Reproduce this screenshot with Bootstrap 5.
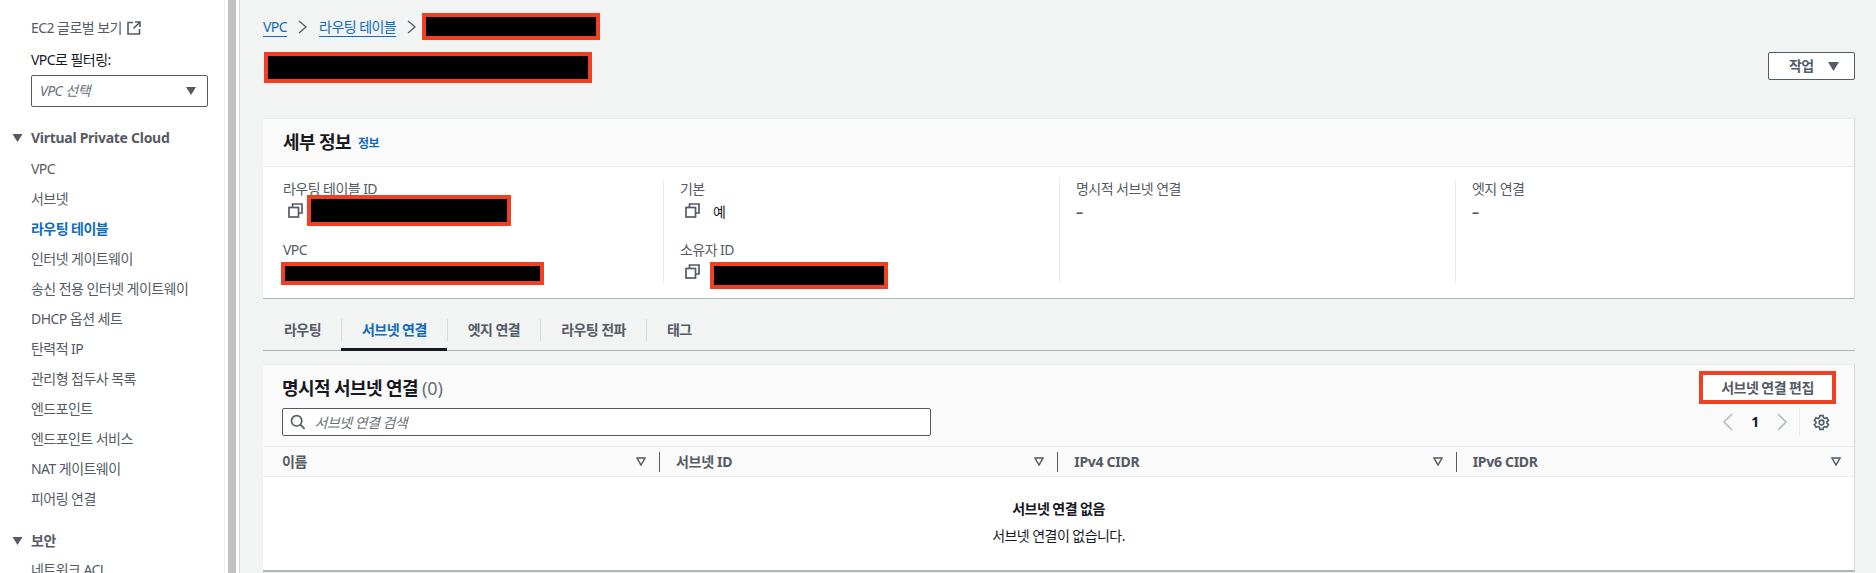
<!DOCTYPE html>
<html lang="ko">
<head>
<meta charset="utf-8">
<title>라우팅 테이블</title>
<link href="https://cdn.jsdelivr.net/npm/bootstrap@5.3.0/dist/css/bootstrap.min.css" rel="stylesheet">
<style>
html,body{height:573px;overflow:hidden}
body{font-family:"Noto Sans","Noto Sans CJK KR",sans-serif;font-size:14px;line-height:20px;letter-spacing:-.55px;color:#545b64;background:#f2f3f3}
.shell{height:573px}
.side-pane{width:225px;flex:none;background:#fff;border-right:1px solid #eaeded;padding:18px 0 0 31px;overflow:hidden}
.side-link{color:#545b64;text-decoration:none}
.side-top svg{margin-left:5px}
.side-label{color:#16191f;margin-top:12px}
.side-select{width:177px;height:32px;margin-top:5px;border:1px solid #545b64;border-radius:2px;padding:0 11px 0 8px;font-style:italic;color:#687078}
.side-head{margin:21px 0 0 -19px;font-weight:700;color:#545b64;gap:8px;letter-spacing:-.28px}
.side-head.sec2{margin-top:17px}
.side-list{margin:6px 0 0;padding:0;list-style:none}
.side-list.sec2{margin-top:4px}
.side-list li{height:30px;line-height:30px;white-space:nowrap}
.side-list .on{color:#0f6bbd;font-weight:700}
.rail{width:15px;flex:none;background:#fff;border-right:1px solid #d5dbdb;padding-left:3px}
.rail-thumb{width:8px;height:100%;background:#c1c1c1}
.main-pane{flex:1;min-width:0;padding:9px 21px 0 23px}
.redact{display:block;flex:none;background:#000;border:4px solid #f04023}
.r-crumb{width:178px;height:27px}
.r-title{width:328px;height:31px;margin-left:1px}
.r-rt{width:204px;height:31px;margin-left:4px}
.r-vpc{width:263px;height:23px;margin:5px 0 0 -2px}
.r-own{width:178px;height:27px;margin:9px 0 0 10px}
.crumbs{height:27px;margin:0;align-items:center;padding-top:4px;font-size:14px}
.crumbs .breadcrumb-item{padding:0;display:flex;align-items:center}
.crumbs .breadcrumb-item::before{display:none}
.crumbs a,.info-link{color:#0f6bbd}
.crumbs a{text-underline-offset:4px}
.crumbs svg{margin:0 12px 0 11px}
.crumbs .breadcrumb-item:nth-child(2) svg{margin-right:6px}
.title-row{margin-top:16px}
.act-btn{width:87px;height:28px;padding:0 15px 0 20px;background:#fff;border:1px solid #545b64;border-radius:2px;color:#545b64;font-size:14px;font-weight:700;line-height:20px;letter-spacing:-.55px}
.pane-card{border:0;border-top:1px solid #eaeded;border-right:1px solid #d5dbdb;border-bottom:1px solid #aab7b8;border-radius:0;background:#fff;margin-top:35px}
.pane-card>.card-header{height:48px;padding:0 0 2px 20px;background:#fafafa;border-bottom:1px solid #eaeded;border-radius:0;color:#16191f}
.pane-title{font-size:18px;font-weight:700;line-height:24px;letter-spacing:-.6px;color:#16191f}
.info-link{font-size:12px;font-weight:700;margin:4px 0 0 7px;text-decoration:none}
.pane-body{padding:12px 3px 15px 4px}
.detail-col{height:104px;padding-left:16px;border-left:1px solid #eaeded}
.detail-col.first{border-left:0}
.val-row{height:22px;margin-bottom:19px;color:#16191f}
.copy-ic{margin-left:5px;flex:none}
.yes-text{margin:3px 0 0 13px}
.dash{color:#545b64;font-weight:700;padding-top:3px}
.tab-bar{margin-top:20px;border-bottom:1px solid #aab7b8;height:32px;align-items:flex-start}
.tab-item{height:32px;border-bottom:3px solid transparent;margin-bottom:-1px}
.tab-item.on{border-bottom-color:#16191f}
.tab-bar .nav-link{height:22px;padding:1px 20px 0;line-height:20px;font-weight:700;color:#545b64;border-left:1px solid #d5dbdb}
.tab-item.lead-tab .nav-link{border-left:0;padding-left:21px}
.tab-item.on .nav-link{color:#0f6bbd}
.pane-card.lower{margin-top:13px;border-bottom-width:2px}
.lower-top{background:#fafafa;padding:6px 20px 10px 19px}
.row-a{height:33px}
.row-b{height:28px;margin-top:4px}
.edit-btn{width:137px;height:33px;margin-right:-2px;padding:0;background:#fff;border:4px solid #f04023;border-radius:0;color:#545b64;font-size:14px;font-weight:700;line-height:20px;letter-spacing:-.55px}
.count-text{font-weight:400;color:#687078;letter-spacing:0}
.search-box{width:649px;height:28px;background:#fff;border:1px solid #545b64;border-radius:2px;padding-left:7px}
.search-box .form-control{height:26px;border:0;padding:0 0 0 9px;background:transparent;font-size:14px;font-style:italic;letter-spacing:-.55px;box-shadow:none}
.search-box .form-control::placeholder{color:#687078}
.pager{color:#16191f;font-weight:700;margin-right:4px}
.pager .num{width:20px;margin:0 12px;text-align:center}
.pager .split{height:28px;border-left:1px solid #eaeded;margin:0 13px 0 12px}
.list-table{table-layout:fixed;margin:0;background:#fff;color:#16191f}
.list-table th{padding:0;height:30px;vertical-align:middle;background:#fafafa;border-top:1px solid #eaeded;border-bottom:1px solid #eaeded;color:#545b64;font-weight:700;letter-spacing:-.3px;box-shadow:none}
.list-table .c-first{width:396px}
.list-table .cell-in{height:20px;padding:0 13px 0 16px;border-left:1px solid #545b64}
.list-table .c-first .cell-in{border-left:0;padding-left:19px}
.list-table td{border:0;padding:22px 0 24px;text-align:center;box-shadow:none}
.empty-note{margin-top:7px}
.empty-head{font-weight:700;color:#16191f}
</style>
</head>
<body>
<div class="shell d-flex">
  <aside class="side-pane">
    <a class="side-link side-top d-flex align-items-center" href="#">EC2 글로벌 보기
      <svg width="14" height="14" viewBox="0 0 14 14" fill="none" stroke="#545b64" stroke-width="1.6"><path d="M6 1.5H1v11.5h11.5V8M8 1h5v5M13 1 6.5 7.5"/></svg></a>
    <div class="side-label">VPC로 필터링:</div>
    <div class="side-select d-flex align-items-center justify-content-between"><span>VPC 선택</span>
      <svg width="10" height="8" viewBox="0 0 10 8" fill="#545b64"><path d="M0 0h10L5 8z"/></svg></div>
    <div class="side-head d-flex align-items-center"><svg width="11" height="8" viewBox="0 0 10 8" fill="#545b64"><path d="M0 0h10L5 8z"/></svg><span>Virtual Private Cloud</span></div>
    <ul class="side-list">
      <li><a class="side-link" href="#">VPC</a></li>
      <li><a class="side-link" href="#">서브넷</a></li>
      <li><a class="side-link on" href="#">라우팅 테이블</a></li>
      <li><a class="side-link" href="#">인터넷 게이트웨이</a></li>
      <li><a class="side-link" href="#">송신 전용 인터넷 게이트웨이</a></li>
      <li><a class="side-link" href="#">DHCP 옵션 세트</a></li>
      <li><a class="side-link" href="#">탄력적 IP</a></li>
      <li><a class="side-link" href="#">관리형 접두사 목록</a></li>
      <li><a class="side-link" href="#">엔드포인트</a></li>
      <li><a class="side-link" href="#">엔드포인트 서비스</a></li>
      <li><a class="side-link" href="#">NAT 게이트웨이</a></li>
      <li><a class="side-link" href="#">피어링 연결</a></li>
    </ul>
    <div class="side-head sec2 d-flex align-items-center"><svg width="11" height="8" viewBox="0 0 10 8" fill="#545b64"><path d="M0 0h10L5 8z"/></svg><span>보안</span></div>
    <ul class="side-list sec2">
      <li><a class="side-link" href="#">네트워크 ACL</a></li>
    </ul>
  </aside>
  <div class="rail"><div class="rail-thumb"></div></div>
  <main class="main-pane">
    <ol class="breadcrumb crumbs">
      <li class="breadcrumb-item"><a href="#">VPC</a>
        <svg width="9" height="14" viewBox="0 0 9 14" fill="none" stroke="#545b64" stroke-width="1.3"><path d="M1 1l7 6-7 6"/></svg></li>
      <li class="breadcrumb-item"><a href="#">라우팅 테이블</a>
        <svg width="9" height="14" viewBox="0 0 9 14" fill="none" stroke="#545b64" stroke-width="1.3"><path d="M1 1l7 6-7 6"/></svg></li>
      <li class="breadcrumb-item active"><span class="redact r-crumb"></span></li>
    </ol>
    <div class="title-row d-flex justify-content-between align-items-start">
      <span class="redact r-title"></span>
      <button class="btn act-btn d-flex align-items-center justify-content-between" type="button">작업
        <svg width="11" height="9" viewBox="0 0 10 8" fill="#545b64"><path d="M0 0h10L5 8z"/></svg></button>
    </div>

    <section class="card pane-card">
      <div class="card-header d-flex align-items-center"><span class="pane-title">세부 정보</span><a class="info-link" href="#">정보</a></div>
      <div class="pane-body">
        <div class="row g-0">
          <div class="col-3 detail-col first">
            <div>라우팅 테이블 ID</div>
            <div class="val-row d-flex align-items-center">
              <svg class="copy-ic" width="15" height="15" viewBox="0 0 15 15" fill="none" stroke="#545b64" stroke-width="1.7"><path d="M4.5 4V1h9.5v9H11"/><rect x="1" y="4.5" width="9.5" height="9.5"/></svg>
              <span class="redact r-rt"></span></div>
            <div>VPC</div>
            <div class="val-row d-flex align-items-center"><span class="redact r-vpc"></span></div>
          </div>
          <div class="col-3 detail-col">
            <div>기본</div>
            <div class="val-row d-flex align-items-center">
              <svg class="copy-ic" width="15" height="15" viewBox="0 0 15 15" fill="none" stroke="#545b64" stroke-width="1.7"><path d="M4.5 4V1h9.5v9H11"/><rect x="1" y="4.5" width="9.5" height="9.5"/></svg>
              <span class="yes-text">예</span></div>
            <div>소유자 ID</div>
            <div class="val-row d-flex align-items-center">
              <svg class="copy-ic" width="15" height="15" viewBox="0 0 15 15" fill="none" stroke="#545b64" stroke-width="1.7"><path d="M4.5 4V1h9.5v9H11"/><rect x="1" y="4.5" width="9.5" height="9.5"/></svg>
              <span class="redact r-own"></span></div>
          </div>
          <div class="col-3 detail-col">
            <div>명시적 서브넷 연결</div>
            <div class="dash">–</div>
          </div>
          <div class="col-3 detail-col">
            <div>엣지 연결</div>
            <div class="dash">–</div>
          </div>
        </div>
      </div>
    </section>

    <ul class="nav tab-bar">
      <li class="nav-item tab-item lead-tab"><a class="nav-link" href="#">라우팅</a></li>
      <li class="nav-item tab-item on"><a class="nav-link" href="#">서브넷 연결</a></li>
      <li class="nav-item tab-item"><a class="nav-link" href="#">엣지 연결</a></li>
      <li class="nav-item tab-item"><a class="nav-link" href="#">라우팅 전파</a></li>
      <li class="nav-item tab-item"><a class="nav-link" href="#">태그</a></li>
    </ul>

    <section class="card pane-card lower">
      <div class="lower-top">
        <div class="row-a d-flex justify-content-between align-items-center">
          <span class="pane-title">명시적 서브넷 연결 <span class="count-text">(0)</span></span>
          <button class="btn edit-btn" type="button">서브넷 연결 편집</button>
        </div>
        <div class="row-b d-flex justify-content-between align-items-center">
          <div class="search-box d-flex align-items-center">
            <svg width="16" height="16" viewBox="0 0 16 16" fill="none" stroke="#545b64" stroke-width="1.7" class="flex-none"><circle cx="6.8" cy="6.8" r="5.3"/><path d="M10.7 10.7 15 15"/></svg>
            <input class="form-control" type="text" placeholder="서브넷 연결 검색">
          </div>
          <div class="pager d-flex align-items-center">
            <svg width="10" height="18" viewBox="0 0 10 18" fill="none" stroke="#aab7b8" stroke-width="1.4"><path d="M9 1 1 9l8 8"/></svg>
            <span class="num">1</span>
            <svg width="10" height="18" viewBox="0 0 10 18" fill="none" stroke="#aab7b8" stroke-width="1.4"><path d="m1 1 8 8-8 8"/></svg>
            <span class="split"></span>
            <svg width="17" height="17" viewBox="0 0 16 16" fill="none" stroke="#545b64" stroke-width="1.5"><path d="M6.5 1.5h3l.4 2 1.3.7 1.9-.7 1.5 2.6-1.5 1.3v1.2l1.5 1.3-1.5 2.6-1.9-.7-1.3.7-.4 2h-3l-.4-2-1.3-.7-1.9.7L1.3 10l1.5-1.3V7.5L1.3 6.2l1.5-2.6 1.9.7 1.3-.7z"/><circle cx="8" cy="8" r="2.2"/></svg>
          </div>
        </div>
      </div>
      <table class="table list-table">
        <thead>
          <tr>
            <th class="c-first"><div class="cell-in d-flex justify-content-between align-items-center">이름<svg width="10" height="9" viewBox="0 0 10 9" fill="none" stroke="#545b64" stroke-width="1.5"><path d="M1 1h8L5 8z"/></svg></div></th>
            <th><div class="cell-in d-flex justify-content-between align-items-center">서브넷 ID<svg width="10" height="9" viewBox="0 0 10 9" fill="none" stroke="#545b64" stroke-width="1.5"><path d="M1 1h8L5 8z"/></svg></div></th>
            <th><div class="cell-in d-flex justify-content-between align-items-center">IPv4 CIDR<svg width="10" height="9" viewBox="0 0 10 9" fill="none" stroke="#545b64" stroke-width="1.5"><path d="M1 1h8L5 8z"/></svg></div></th>
            <th><div class="cell-in d-flex justify-content-between align-items-center">IPv6 CIDR<svg width="10" height="9" viewBox="0 0 10 9" fill="none" stroke="#545b64" stroke-width="1.5"><path d="M1 1h8L5 8z"/></svg></div></th>
          </tr>
        </thead>
        <tbody>
          <tr><td colspan="4"><div class="empty-head">서브넷 연결 없음</div><div class="empty-note">서브넷 연결이 없습니다.</div></td></tr>
        </tbody>
      </table>
    </section>
  </main>
</div>
<script src="https://cdn.jsdelivr.net/npm/bootstrap@5.3.0/dist/js/bootstrap.bundle.min.js"></script>
</body>
</html>
